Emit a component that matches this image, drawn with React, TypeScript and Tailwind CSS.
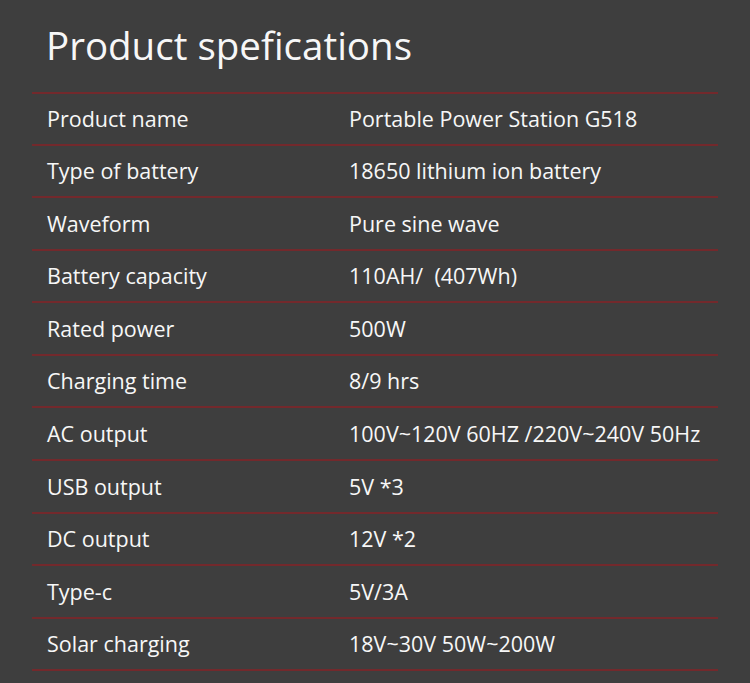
const specs: [string, string, string][] = [
  ['Product name', 'Portable Power Station G518', 'h-[52px]'],
  ['Type of battery', '18650 lithium ion battery', 'h-[52px]'],
  ['Waveform', 'Pure sine wave', 'h-[53px]'],
  ['Battery capacity', '110AH/  (407Wh)', 'h-[52px]'],
  ['Rated power', '500W', 'h-[53px]'],
  ['Charging time', '8/9 hrs', 'h-[52px]'],
  ['AC output', '100V~120V 60HZ /220V~240V 50Hz', 'h-[53px]'],
  ['USB output', '5V *3', 'h-[53px]'],
  ['DC output', '12V *2', 'h-[52px]'],
  ['Type-c', '5V/3A', 'h-[53px]'],
  ['Solar charging', '18V~30V 50W~200W', 'h-[52px]'],
]

export default function App() {
  return (
    <div className="h-[683px] w-[750px] overflow-hidden bg-[#3e3e3e] font-['Open_Sans',sans-serif] text-[#f7f7f7]">
      <div className="flex h-[92px] items-start pl-[46px] pt-[21px]">
        <h1 className="text-[38.5px] leading-[48px]">Product spefications</h1>
      </div>
      <div className="mx-8 border-t-2 border-[#73292c]">
        {specs.map(([label, value, h]) => (
          <div key={label} className={`flex items-center border-b-2 border-[#73292c] pt-px text-[21.5px] ${h}`}>
            <span className="w-[317px] pl-[15px]">{label}</span>
            <span className="whitespace-pre">{value}</span>
          </div>
        ))}
      </div>
    </div>
  )
}
